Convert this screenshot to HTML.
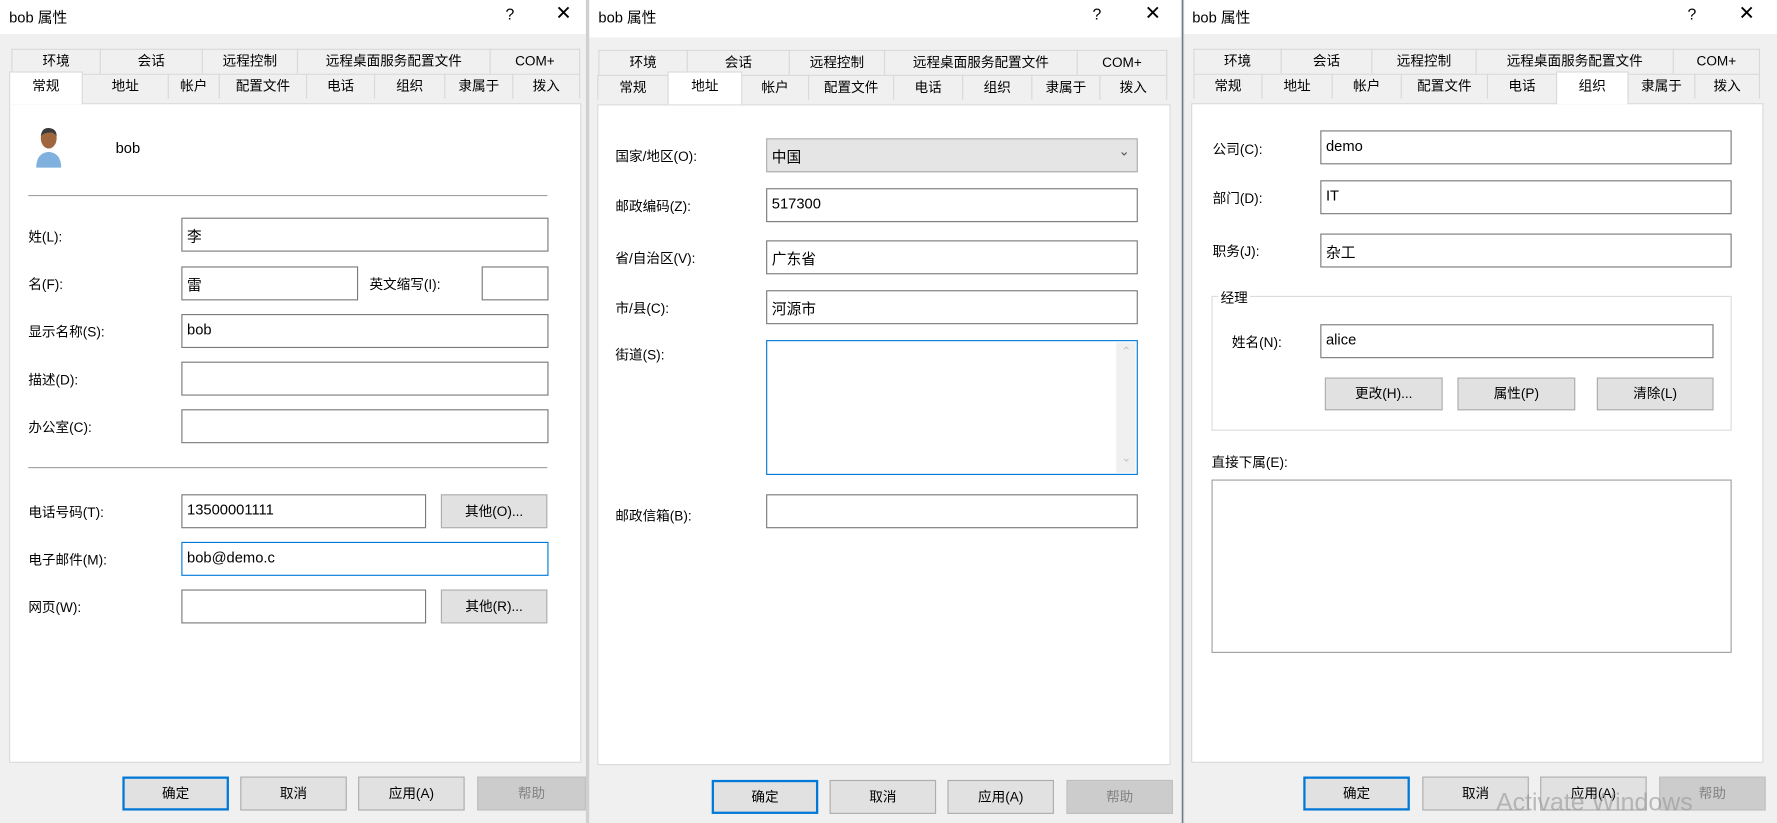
<!DOCTYPE html>
<html><head><meta charset="utf-8">
<style>
html,body{margin:0;padding:0;width:1777px;height:823px;overflow:hidden;background:#f0f0f0;}
#w{position:absolute;left:0;top:0;width:1568px;height:726px;transform:scale(1.1333,1.1336);transform-origin:0 0;font-family:"Liberation Sans","Noto Sans CJK SC",sans-serif;font-size:12px;color:#000;}
.a{position:absolute;white-space:nowrap;}
.dlg{position:absolute;top:0;height:726px;background:#f0f0f0;}
.tb{position:absolute;left:0;top:0;right:0;height:30px;background:#fff;}
.tt{position:absolute;top:5px;font-size:13px;white-space:nowrap;}
.tab{position:absolute;height:22px;border:1px solid #d9d9d9;border-bottom:none;background:#f0f0f0;box-sizing:border-box;text-align:center;line-height:21px;font-size:12px;white-space:nowrap;}
.sel{background:#fff;height:29px;border-color:#d9d9d9;z-index:3;line-height:24px;}
.pan{position:absolute;background:#fff;border:1px solid #d9d9d9;box-sizing:border-box;}
.in{position:absolute;height:30px;border:1px solid #7a7a7a;background:#fff;box-sizing:border-box;padding:5px 0 0 4px;font-size:13px;white-space:nowrap;}
.fo{border-color:#0078d7;}
.btn{position:absolute;height:30px;background:#e1e1e1;border:1px solid #adadad;box-sizing:border-box;text-align:center;line-height:28px;white-space:nowrap;}
.def{border:2px solid #0078d7;line-height:26px;}
.dis{background:#cccccc;border-color:#bfbfbf;color:#838383;}
.hr{position:absolute;height:1px;background:#a0a0a0;}
</style></head><body><div id="w">

<!-- Dialog 1 -->
<div class="dlg" style="left:0;width:517px;">
 <div class="tb"></div>
 <div class="tt" style="left:8px;">bob 属性</div>
 <div class="a" style="left:446px;top:4px;font-size:14px;">?</div>
 <div class="a" style="left:490px;top:2px;font-size:17px;">✕</div>
 <div class="tab" style="left:10px;top:43px;width:79px;">环境</div>
 <div class="tab" style="left:88px;top:43px;width:91px;">会话</div>
 <div class="tab" style="left:178px;top:43px;width:85px;">远程控制</div>
 <div class="tab" style="left:262px;top:43px;width:171px;">远程桌面服务配置文件</div>
 <div class="tab" style="left:432px;top:43px;width:80px;">COM+</div>
 <div class="tab sel" style="left:8px;top:63px;width:65px;">常规</div>
 <div class="tab" style="left:72px;top:65px;width:77px;">地址</div>
 <div class="tab" style="left:148px;top:65px;width:46px;">帐户</div>
 <div class="tab" style="left:193px;top:65px;width:78px;">配置文件</div>
 <div class="tab" style="left:270px;top:65px;width:61px;">电话</div>
 <div class="tab" style="left:330px;top:65px;width:63px;">组织</div>
 <div class="tab" style="left:392px;top:65px;width:61px;">隶属于</div>
 <div class="tab" style="left:452px;top:65px;width:60px;">拨入</div>
 <div class="pan" style="left:8px;top:91px;width:505px;height:582px;z-index:2;"></div>
 <div class="a" style="left:0;top:0;z-index:4;">
  <svg class="a" style="left:28px;top:108px;" width="30" height="40" viewBox="0 0 30 40">
   <path d="M4 40 Q4 27 15 26 Q26 27 26 40Z" fill="#7fb0de"/>
   <ellipse cx="15" cy="14" rx="7" ry="9" fill="#a0673f"/>
   <path d="M8 12 Q9 4 16 5 Q22 6 22 12 Q19 8 15 9 Q11 9 8 12Z" fill="#3a3a3a"/>
  </svg>
  <div class="a" style="left:102px;top:123px;font-size:13px;">bob</div>
  <div class="hr" style="left:25px;top:172px;width:458px;"></div>
  <div class="a" style="left:25px;top:200px;">姓(L):</div>
  <div class="in" style="left:160px;top:192px;width:324px;">李</div>
  <div class="a" style="left:25px;top:242px;">名(F):</div>
  <div class="in" style="left:160px;top:235px;width:156px;">雷</div>
  <div class="a" style="left:326px;top:242px;">英文缩写(I):</div>
  <div class="in" style="left:425px;top:235px;width:59px;"></div>
  <div class="a" style="left:25px;top:284px;">显示名称(S):</div>
  <div class="in" style="left:160px;top:277px;width:324px;">bob</div>
  <div class="a" style="left:25px;top:326px;">描述(D):</div>
  <div class="in" style="left:160px;top:319px;width:324px;"></div>
  <div class="a" style="left:25px;top:368px;">办公室(C):</div>
  <div class="in" style="left:160px;top:361px;width:324px;"></div>
  <div class="hr" style="left:25px;top:412px;width:458px;"></div>
  <div class="a" style="left:25px;top:443px;">电话号码(T):</div>
  <div class="in" style="left:160px;top:436px;width:216px;">13500001111</div>
  <div class="btn" style="left:389px;top:436px;width:94px;">其他(O)...</div>
  <div class="a" style="left:25px;top:485px;">电子邮件(M):</div>
  <div class="in fo" style="left:160px;top:478px;width:324px;">bob@demo.c</div>
  <div class="a" style="left:25px;top:527px;">网页(W):</div>
  <div class="in" style="left:160px;top:520px;width:216px;"></div>
  <div class="btn" style="left:389px;top:520px;width:94px;">其他(R)...</div>
 </div>
 <div class="btn def" style="left:108px;top:685px;width:94px;">确定</div>
 <div class="btn" style="left:212px;top:685px;width:94px;">取消</div>
 <div class="btn" style="left:316px;top:685px;width:94px;">应用(A)</div>
 <div class="btn dis" style="left:421px;top:685px;width:96px;">帮助</div>
</div>
<div class="a" style="left:517px;top:0;width:3px;height:726px;background:#d0d0d0;"></div>

<!-- Dialog 2 -->
<div class="dlg" style="left:520px;width:522px;">
 <div class="tb" style="height:33px;"></div>
 <div class="tt" style="left:8px;">bob 属性</div>
 <div class="a" style="left:444px;top:4px;font-size:14px;">?</div>
 <div class="a" style="left:490px;top:2px;font-size:17px;">✕</div>
 <div class="tab" style="left:8px;top:44px;width:79px;">环境</div>
 <div class="tab" style="left:86px;top:44px;width:91px;">会话</div>
 <div class="tab" style="left:176px;top:44px;width:85px;">远程控制</div>
 <div class="tab" style="left:260px;top:44px;width:171px;">远程桌面服务配置文件</div>
 <div class="tab" style="left:430px;top:44px;width:80px;">COM+</div>
 <div class="tab" style="left:7px;top:66px;width:63px;">常规</div>
 <div class="tab sel" style="left:69px;top:63px;width:66px;">地址</div>
 <div class="tab" style="left:134px;top:66px;width:60px;">帐户</div>
 <div class="tab" style="left:193px;top:66px;width:76px;">配置文件</div>
 <div class="tab" style="left:268px;top:66px;width:62px;">电话</div>
 <div class="tab" style="left:329px;top:66px;width:62px;">组织</div>
 <div class="tab" style="left:390px;top:66px;width:61px;">隶属于</div>
 <div class="tab" style="left:450px;top:66px;width:60px;">拨入</div>
 <div class="pan" style="left:7px;top:92px;width:506px;height:583px;z-index:2;"></div>
 <div class="a" style="left:0;top:0;z-index:4;">
  <div class="a" style="left:23px;top:129px;">国家/地区(O):</div>
  <div class="in" style="left:156px;top:122px;width:328px;height:30px;background:#e5e5e5;border-color:#adadad;">中国<span class="a" style="right:6px;top:3px;font-size:12px;color:#555;">&#8964;</span></div>
  <div class="a" style="left:23px;top:173px;">邮政编码(Z):</div>
  <div class="in" style="left:156px;top:166px;width:328px;">517300</div>
  <div class="a" style="left:23px;top:219px;">省/自治区(V):</div>
  <div class="in" style="left:156px;top:212px;width:328px;">广东省</div>
  <div class="a" style="left:23px;top:263px;">市/县(C):</div>
  <div class="in" style="left:156px;top:256px;width:328px;">河源市</div>
  <div class="a" style="left:23px;top:304px;">街道(S):</div>
  <div class="in fo" style="left:156px;top:300px;width:328px;height:119px;">
   <div class="a" style="right:1px;top:1px;width:17px;height:115px;background:#f0f0f0;"></div>
   <div class="a" style="right:5px;top:4px;color:#c0c0c0;font-size:10px;">&#8963;</div>
   <div class="a" style="right:5px;top:98px;color:#c0c0c0;font-size:10px;">&#8964;</div>
  </div>
  <div class="a" style="left:23px;top:446px;">邮政信箱(B):</div>
  <div class="in" style="left:156px;top:436px;width:328px;"></div>
 </div>
 <div class="btn def" style="left:108px;top:688px;width:94px;">确定</div>
 <div class="btn" style="left:212px;top:688px;width:94px;">取消</div>
 <div class="btn" style="left:316px;top:688px;width:94px;">应用(A)</div>
 <div class="btn dis" style="left:421px;top:688px;width:94px;">帮助</div>
</div>
<div class="a" style="left:1042px;top:0;width:3px;height:726px;background:#d0d0d0;"></div>
<div class="a" style="left:1043px;top:0;width:1px;height:726px;background:#6b7a8c;"></div>

<!-- Dialog 3 -->
<div class="dlg" style="left:1045px;width:523px;">
 <div class="tb"></div>
 <div class="tt" style="left:7px;">bob 属性</div>
 <div class="a" style="left:444px;top:4px;font-size:14px;">?</div>
 <div class="a" style="left:489px;top:2px;font-size:17px;">✕</div>
 <div class="tab" style="left:8px;top:43px;width:78px;">环境</div>
 <div class="tab" style="left:85px;top:43px;width:81px;">会话</div>
 <div class="tab" style="left:165px;top:43px;width:93px;">远程控制</div>
 <div class="tab" style="left:257px;top:43px;width:175px;">远程桌面服务配置文件</div>
 <div class="tab" style="left:431px;top:43px;width:77px;">COM+</div>
 <div class="tab" style="left:8px;top:65px;width:61px;">常规</div>
 <div class="tab" style="left:68px;top:65px;width:63px;">地址</div>
 <div class="tab" style="left:130px;top:65px;width:62px;">帐户</div>
 <div class="tab" style="left:191px;top:65px;width:77px;">配置文件</div>
 <div class="tab" style="left:267px;top:65px;width:62px;">电话</div>
 <div class="tab sel" style="left:328px;top:63px;width:64px;">组织</div>
 <div class="tab" style="left:391px;top:65px;width:60px;">隶属于</div>
 <div class="tab" style="left:450px;top:65px;width:58px;">拨入</div>
 <div class="pan" style="left:6px;top:91px;width:505px;height:582px;z-index:2;"></div>
 <div class="a" style="left:0;top:0;z-index:4;">
  <div class="a" style="left:25px;top:123px;">公司(C):</div>
  <div class="in" style="left:120px;top:115px;width:363px;">demo</div>
  <div class="a" style="left:25px;top:166px;">部门(D):</div>
  <div class="in" style="left:120px;top:159px;width:363px;">IT</div>
  <div class="a" style="left:25px;top:213px;">职务(J):</div>
  <div class="in" style="left:120px;top:206px;width:363px;">杂工</div>
  <div class="a" style="left:24px;top:261px;width:459px;height:119px;border:1px solid #dcdcdc;box-sizing:border-box;"></div>
  <div class="a" style="left:30px;top:254px;background:#fff;padding:0 2px;">经理</div>
  <div class="a" style="left:42px;top:293px;">姓名(N):</div>
  <div class="in" style="left:120px;top:286px;width:347px;">alice</div>
  <div class="btn" style="left:124px;top:333px;width:104px;height:29px;line-height:27px;">更改(H)...</div>
  <div class="btn" style="left:241px;top:333px;width:104px;height:29px;line-height:27px;">属性(P)</div>
  <div class="btn" style="left:364px;top:333px;width:103px;height:29px;line-height:27px;">清除(L)</div>
  <div class="a" style="left:24px;top:399px;">直接下属(E):</div>
  <div class="a" style="left:24px;top:423px;width:459px;height:153px;border:1px solid #a0a0a0;box-sizing:border-box;background:#fff;"></div>
 </div>
 <div class="btn def" style="left:105px;top:685px;width:94px;">确定</div>
 <div class="btn" style="left:210px;top:685px;width:94px;">取消</div>
 <div class="btn" style="left:314px;top:685px;width:94px;">应用(A)</div>
 <div class="btn dis" style="left:419px;top:685px;width:94px;">帮助</div>
 <div class="a" style="left:275px;top:695px;font-size:22px;color:rgba(150,150,150,0.6);z-index:6;">Activate Windows</div>
</div>

</div></body></html>
